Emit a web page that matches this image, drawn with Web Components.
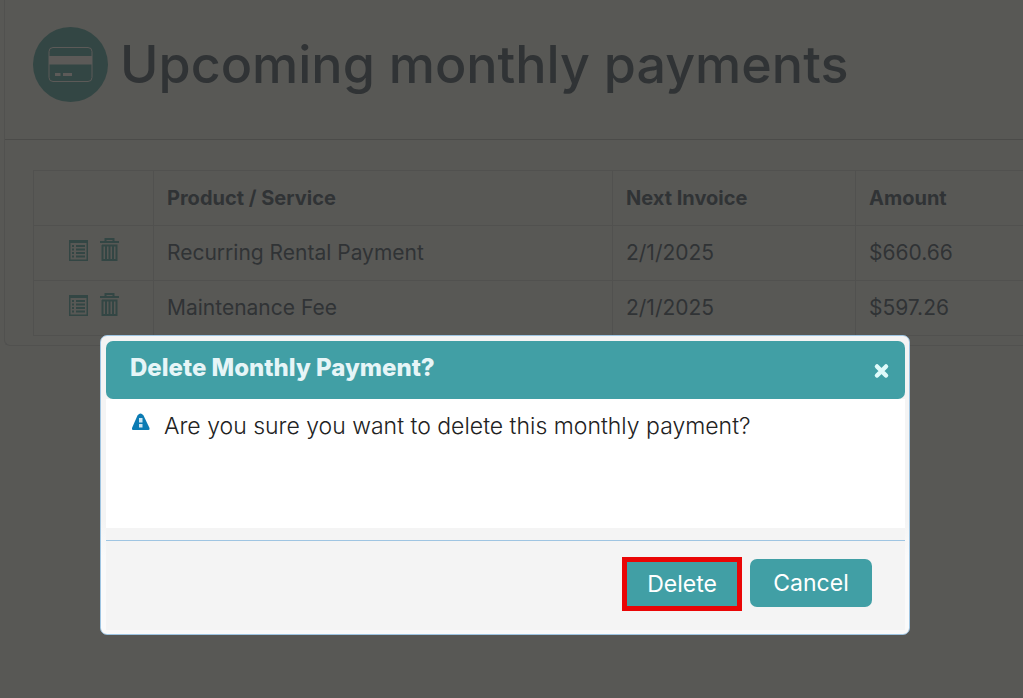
<!DOCTYPE html>
<html lang="en">

<head>
    <meta charset="utf-8">
    <meta name="viewport" content="width=device-width, initial-scale=1.0">
    <title>Upcoming monthly payments</title>
    <style>
        body {
            margin: 0;
            background: #585855;
            color: #303335;
            font-family: Inter, "Liberation Sans", sans-serif;
            font-size: 21px;
            overflow: hidden;
        }
    </style>
</head>

<body>
    <payments-panel>
        <span slot="title">Upcoming monthly payments</span>
        <payments-table></payments-table>
    </payments-panel>

    <confirm-dialog>
        <span slot="title">Delete Monthly Payment?</span>
        Are you sure you want to delete this monthly payment?
        <dialog-button slot="actions" marked>Delete</dialog-button>
        <dialog-button slot="actions">Cancel</dialog-button>
    </confirm-dialog>

    <template id="panel-template">
        <style>
            :host {
                display: block;
                margin-left: 4px;
                border-left: 1px solid #51514f;
                border-bottom: 1px solid #51514f;
                border-radius: 0 0 0 6px;
            }

            header {
                display: flex;
                align-items: center;
                gap: 12px;
                padding: 27px 28px 37px;
                border-bottom: 1px solid #4b4b49;
            }

            h1 {
                margin: 0;
                font-size: 52px;
                font-weight: 500;
                line-height: 75px;
                white-space: nowrap;
            }

            svg {
                flex: none;
            }

            section {
                padding: 30px 0 9px 28px;
            }
        </style>
        <header>
            <svg width="75" height="75" viewBox="0 0 75 75">
                <circle cx="37.5" cy="37.5" r="37.5" fill="#334644" />
                <rect x="16" y="20.5" width="43" height="34" rx="4" fill="none" stroke="#5c5a58" />
                <path d="M16 29h43v8.500h-43z" fill="#5c5a58" />
                <path d="M22 46h5.500v3h-5.500zM30 46h9v3h-9z" fill="#5c5a58" />
            </svg>
            <h1><slot name="title"></slot></h1>
        </header>
        <section>
            <slot></slot>
        </section>
    </template>

    <template id="table-template">
        <style>
            :host {
                display: block;
            }

            table {
                width: 100%;
                table-layout: fixed;
                border-collapse: collapse;
            }

            .col-actions { width: 120px; }
            .col-product { width: 459px; }
            .col-date { width: 243px; }

            th,
            td {
                box-sizing: border-box;
                height: 55px;
                padding: 0 13px;
                border: 1px solid #51514f;
                border-right: 0;
                text-align: left;
                line-height: 28px;
                white-space: nowrap;
            }

            th {
                font-size: 20px;
                font-weight: 700;
            }

            .icons {
                display: flex;
                justify-content: center;
                gap: 10px;
                padding-bottom: 6px;
            }

            a {
                display: block;
                height: 24px;
                color: #334644;
            }

            svg {
                display: block;
            }
        </style>
        <table>
            <colgroup>
                <col class="col-actions">
                <col class="col-product">
                <col class="col-date">
                <col>
            </colgroup>
            <thead>
                <tr>
                    <th></th>
                    <th>Product / Service</th>
                    <th>Next Invoice</th>
                    <th>Amount</th>
                </tr>
            </thead>
            <tbody></tbody>
        </table>
    </template>

    <template id="row-icons-template">
        <div class="icons">
            <a href="#details" aria-label="Details">
                <svg width="21" height="24" viewBox="0 0 21 24" fill="currentColor">
                    <path fill-rule="evenodd" d="M1 2h19v21H1zM2.500 5v16.500h16V5z" />
                    <path d="M4 7h2v2H4zM8 7h9v2H8zM4 10.500h2v2H4zM8 10.500h9v2H8zM4 14h2v2H4zM8 14h9v2H8zM4 17.500h2v2H4zM8 17.500h9v2H8z" />
                </svg>
            </a>
            <a href="#delete" aria-label="Delete">
                <svg width="21" height="24" viewBox="0 0 21 24" fill="none" stroke="currentColor">
                    <path d="M1 4h19" stroke-width="2" />
                    <path d="M6.500 3.500V1h8v2.500" stroke-width="2" />
                    <path d="M3 7.500h15.500M3.500 7v15h14V7M7 7v15M10.500 7v15M14 7v15" stroke-width="2" />
                </svg>
            </a>
        </div>
    </template>

    <template id="dialog-template">
        <style>
            :host {
                position: absolute;
                inset: 0;
                display: block;
                padding: 335px 113px 0 100px;
                color: #222;
            }

            .frame {
                padding: 5px 4px 4px 5px;
                border: 1px solid #9fc5e2;
                border-radius: 7px;
                background: linear-gradient(#f4f4f4 62%, #fafafa 74%);
            }

            header {
                display: flex;
                justify-content: space-between;
                align-items: flex-start;
                height: 58px;
                box-sizing: border-box;
                padding: 11px 15px 0 24px;
                border-radius: 7px;
                background: #419fa5;
                color: #e6f5f7;
            }

            h2 {
                margin: 0;
                font-size: 24px;
                font-weight: 800;
                line-height: 32px;
            }

            .close {
                display: block;
                margin-top: 10px;
                padding: 0;
                border: 0;
                background: none;
                color: #dffafa;
            }

            .close svg,
            .message svg {
                display: block;
                flex: none;
            }

            .message {
                display: flex;
                align-items: flex-start;
                gap: 13px;
                min-height: 118px;
                padding: 11px 24px 0;
                background: #fff;
                font-size: 23px;
                font-weight: 300;
                line-height: 32px;
            }

            footer {
                display: flex;
                justify-content: flex-end;
                gap: 8px;
                min-height: 73px;
                padding: 16px 33px 0 0;
                border-top: 1px solid #9fc5e2;
                background: #f4f4f4;
            }

            .space {
                height: 12px;
                background: #f4f4f4;
            }
        </style>
        <div class="frame" role="dialog" aria-modal="true">
            <header>
                <h2><slot name="title"></slot></h2>
                <button class="close" aria-label="Close">
                    <svg width="17" height="18" viewBox="0 0 17 18">
                        <path d="M4 4.500L13 13.500M13 4.500L4 13.500" stroke="currentColor" stroke-width="4.500" stroke-linecap="round" />
                    </svg>
                </button>
            </header>
            <div class="message">
                <svg width="21" height="23" viewBox="0 0 21 23">
                    <path d="M7.500 5.500Q10.500 1.500 13.500 5.500L19.500 18Q20 20 18.500 20H3Q1.500 20 2 18Z" fill="#0b7bb3" />
                    <path d="M9 8h3.500v4.500H9zM9 14h3.500v3.500H9z" fill="#cfe6f2" />
                </svg>
                <div><slot></slot></div>
            </div>
            <div class="space"></div>
            <footer>
                <slot name="actions"></slot>
            </footer>
        </div>
    </template>

    <template id="button-template">
        <style>
            :host {
                display: block;
            }

            button {
                display: block;
                min-width: 122px;
                height: 48px;
                margin-top: 2px;
                padding: 0 20px;
                border: 0;
                border-radius: 7px;
                background: #419fa5;
                color: #fff;
                font: inherit;
                font-size: 23px;
                font-weight: 400;
                line-height: 28px;
            }

            :host([marked]) button {
                min-width: 120px;
                height: 54px;
                margin-top: 0;
                padding: 0 16px;
                border: 5px solid #ea0606;
                border-radius: 0;
            }
        </style>
        <button type="button"><slot></slot></button>
    </template>

    <script type="text/javascript">

        // base class, puts a template into the shadow root
        class TemplateElement extends HTMLElement {
            constructor(templateId) {
                super();
                let template = document.getElementById(templateId);
                this.attachShadow({ mode: 'open' }).appendChild(template.content.cloneNode(true));
            }
        }

        class PaymentsPanel extends TemplateElement {
            constructor() {
                super('panel-template');
            }
        }
        customElements.define('payments-panel', PaymentsPanel);


        // TABLE, one row per payment
        class PaymentsTable extends TemplateElement {
            constructor() {
                super('table-template');

                let payments = [
                    ['Recurring Rental Payment', '2/1/2025', '$660.66'],
                    ['Maintenance Fee', '2/1/2025', '$597.26']
                ];
                let icons = document.getElementById('row-icons-template');
                let body = this.shadowRoot.querySelector('tbody');

                for (let payment of payments) {
                    let row = body.insertRow();
                    let iconCell = row.insertCell();
                    iconCell.appendChild(icons.content.cloneNode(true));
                    for (let text of payment) {
                        row.insertCell().textContent = text;
                    }
                }
            }
        }
        customElements.define('payments-table', PaymentsTable);


        class DialogButton extends TemplateElement {
            constructor() {
                super('button-template');
            }
        }
        customElements.define('dialog-button', DialogButton);


        class ConfirmDialog extends TemplateElement {
            constructor() {
                super('dialog-template');
            }
        }
        customElements.define('confirm-dialog', ConfirmDialog);

    </script>
</body>
</html>
